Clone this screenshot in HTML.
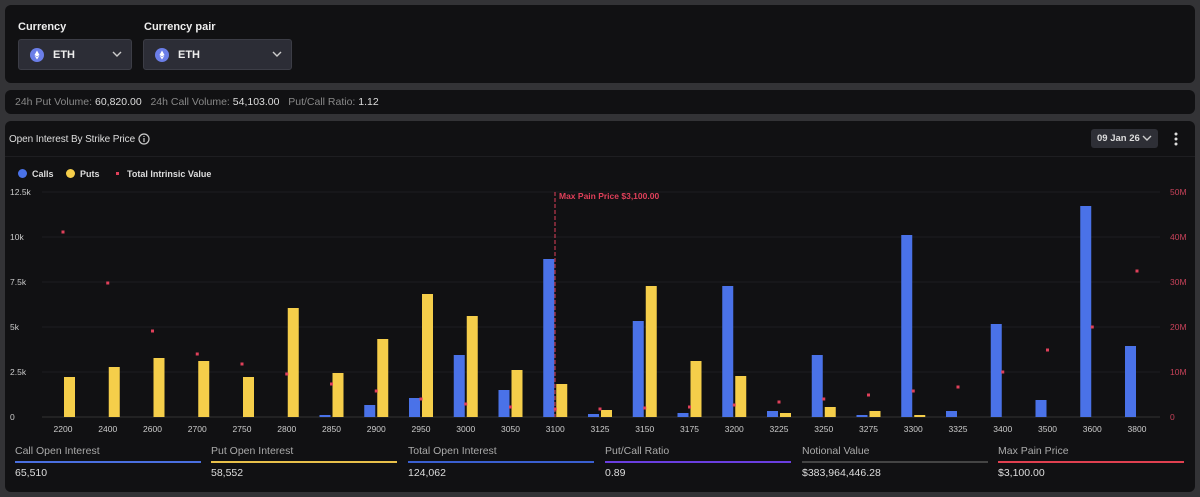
<!DOCTYPE html><html><head><style>
*{margin:0;padding:0;box-sizing:border-box}
body{width:1200px;height:497px;background:#333336;font-family:"Liberation Sans",sans-serif;color:#ddd;position:relative;overflow:hidden}
.p{position:absolute;background:#111113;border-radius:6px}
.lbl{position:absolute;font-size:11px;font-weight:bold;color:#eee}
.sel{position:absolute;top:39px;height:31px;background:#2c2d36;border:1px solid #3c3d46;border-radius:3px}
.sel .ic{position:absolute;left:11px;top:8px;width:14px;height:14px}
.sel .t{position:absolute;left:34px;top:9px;font-size:11px;font-weight:bold;color:#eee}
.sel .ch{position:absolute;right:9px;top:11px}
.st{position:absolute;top:445px;font-size:10.5px;color:#aaa}
.sl{position:absolute;top:461px;height:2px;width:186px}
.sv{position:absolute;top:467px;font-size:10.5px;color:#ddd}
</style></head><body>
<div class="p" style="left:5px;top:5px;width:1190px;height:78px"></div>
<div class="lbl" style="left:18px;top:21px">Currency</div>
<div class="lbl" style="left:144px;top:21px">Currency pair</div>
<div class="sel" style="left:18px;width:114px"><svg class="ic" viewBox="0 0 14 14"><circle cx="7" cy="7" r="7" fill="#6b7ee8"/><path d="M7 2.5L4.5 7 7 8.5 9.5 7zM4.5 7.6L7 11.5 9.5 7.6 7 9.1z" fill="#fff"/></svg><div class="t">ETH</div><svg class="ch" width="10" height="7" viewBox="0 0 10 7"><path d="M1 1l4 4 4-4" stroke="#ccc" stroke-width="1.4" fill="none"/></svg></div>
<div class="sel" style="left:143px;width:149px"><svg class="ic" viewBox="0 0 14 14"><circle cx="7" cy="7" r="7" fill="#6b7ee8"/><path d="M7 2.5L4.5 7 7 8.5 9.5 7zM4.5 7.6L7 11.5 9.5 7.6 7 9.1z" fill="#fff"/></svg><div class="t">ETH</div><svg class="ch" width="10" height="7" viewBox="0 0 10 7"><path d="M1 1l4 4 4-4" stroke="#ccc" stroke-width="1.4" fill="none"/></svg></div>
<div class="p" style="left:5px;top:90px;width:1190px;height:24px"></div>
<div style="position:absolute;left:15px;top:96px;font-size:10.5px;color:#888">24h Put Volume: <span style="color:#ddd">60,820.00</span>&nbsp;&nbsp;&nbsp;24h Call Volume: <span style="color:#ddd">54,103.00</span>&nbsp;&nbsp;&nbsp;Put/Call Ratio: <span style="color:#ddd">1.12</span></div>
<div class="p" style="left:5px;top:121px;width:1190px;height:371px"></div>
<div style="position:absolute;left:9px;top:134px;font-size:10px;color:#ddd;letter-spacing:-0.1px">Open Interest By Strike Price</div>
<svg style="position:absolute;left:138px;top:133px" width="12" height="12"><circle cx="6" cy="6" r="5" stroke="#ccc" fill="none" stroke-width="1.2"/><path d="M6 5v4M6 3v1" stroke="#ccc" stroke-width="1.2"/></svg>
<div style="position:absolute;left:1091px;top:129px;width:67px;height:19px;background:#2e2f36;border-radius:3px;font-size:9.5px;font-weight:bold;color:#ddd;padding:4px 0 0 6px">09 Jan 26</div>
<svg style="position:absolute;left:1142px;top:135px" width="10" height="7"><path d="M1 1l4 4 4-4" stroke="#ccc" stroke-width="1.4" fill="none"/></svg>
<svg style="position:absolute;left:1174px;top:131px" width="4" height="16"><circle cx="2" cy="3" r="1.5" fill="#ddd"/><circle cx="2" cy="8" r="1.5" fill="#ddd"/><circle cx="2" cy="13" r="1.5" fill="#ddd"/></svg>
<div style="position:absolute;left:5px;top:156px;width:1190px;height:1px;background:#1e1e21"></div>
<div style="position:absolute;left:18px;top:169px;width:9px;height:9px;border-radius:50%;background:#4a72e8"></div>
<div style="position:absolute;left:32px;top:169px;font-size:9px;font-weight:bold;color:#ddd">Calls</div>
<div style="position:absolute;left:66px;top:169px;width:9px;height:9px;border-radius:50%;background:#f5ce4a"></div>
<div style="position:absolute;left:80px;top:169px;font-size:9px;font-weight:bold;color:#ddd">Puts</div>
<div style="position:absolute;left:116px;top:172px;width:3px;height:3px;background:#e0405a"></div>
<div style="position:absolute;left:127px;top:169px;font-size:9px;font-weight:bold;color:#ddd">Total Intrinsic Value</div>
<svg style="position:absolute;left:0;top:180px" width="1200" height="260" font-family="Liberation Sans" font-size="8.5">
<g id="c"></g>
</svg>
<script>
const g=document.getElementById('c');let s='';
const Y=v=>v-180;
const lbl=['12.5k','10k','7.5k','5k','2.5k','0'],rl=['50M','40M','30M','20M','10M','0'];
for(let i=0;i<6;i++){const y=Y(192+45*i);s+=`<line x1="42" x2="1160" y1="${y}" y2="${y}" stroke="${i==5?'#333':'#1d1d20'}"/>`;s+=`<text x="10" y="${y+3}" fill="#ccc">${lbl[i]}</text><text x="1170" y="${y+3}" fill="#c8425a">${rl[i]}</text>`;}
const k=[2200,2400,2600,2700,2750,2800,2850,2900,2950,3000,3050,3100,3125,3150,3175,3200,3225,3250,3275,3300,3325,3400,3500,3600,3800];
const c=[0,0,0,0,0,0,2,12,19,62,27,158,3,96,4,131,6,62,2,182,6,93,17,211,71];
const p=[40,50,59,56,40,109,44,78,123,101,47,33,7,131,56,41,4,10,6,2,0,0,0,0,0];
const d=[232,283,331,354,364,374,384,391,399,404,407,409,409,408,407,405,402,399,395,391,387,372,350,327,271];
k.forEach((v,i)=>{const x=63+i*44.75;
if(c[i])s+=`<rect x="${x-12}" y="${Y(417-c[i])}" width="11" height="${c[i]}" fill="#4a72e8"/>`;
if(p[i])s+=`<rect x="${x+1}" y="${Y(417-p[i])}" width="11" height="${p[i]}" fill="#f5ce4a"/>`;
s+=`<rect x="${x-1.5}" y="${Y(d[i])-1.5}" width="3" height="3" fill="#e0405a"/>`;
s+=`<text x="${x}" y="${Y(432)}" fill="#ccc" text-anchor="middle">${v}</text>`;});
s+=`<line x1="555" x2="555" y1="${Y(192)}" y2="${Y(417)}" stroke="#e0405a" stroke-dasharray="4,2"/><text x="559" y="${Y(199)}" fill="#e0405a" font-weight="bold">Max Pain Price $3,100.00</text>`;
g.innerHTML=s;
</script>
<div class="st" style="left:15px">Call Open Interest</div><div class="sl" style="left:15px;background:#4a6fe0"></div><div class="sv" style="left:15px">65,510</div>
<div class="st" style="left:211px">Put Open Interest</div><div class="sl" style="left:211px;background:#e8c04a"></div><div class="sv" style="left:211px">58,552</div>
<div class="st" style="left:408px">Total Open Interest</div><div class="sl" style="left:408px;background:#3a5fd0"></div><div class="sv" style="left:408px">124,062</div>
<div class="st" style="left:605px">Put/Call Ratio</div><div class="sl" style="left:605px;background:#6a3ee0"></div><div class="sv" style="left:605px">0.89</div>
<div class="st" style="left:802px">Notional Value</div><div class="sl" style="left:802px;background:#444"></div><div class="sv" style="left:802px">$383,964,446.28</div>
<div class="st" style="left:998px">Max Pain Price</div><div class="sl" style="left:998px;background:#e04050"></div><div class="sv" style="left:998px">$3,100.00</div>
</body></html>
